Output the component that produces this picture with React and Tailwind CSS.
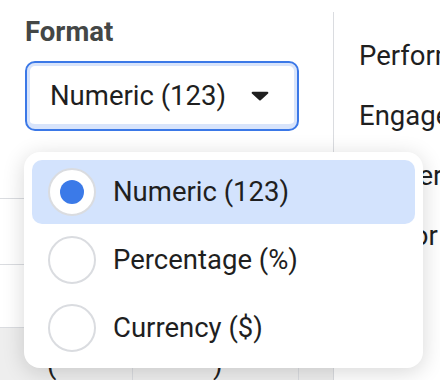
import React, { useState } from 'react'

const options = [
  { id: 'numeric', label: 'Numeric (123)' },
  { id: 'percent', label: 'Percentage (%)' },
  { id: 'currency', label: 'Currency ($)' },
]

const metrics = ['Performance', 'Engagement', 'Viewers', 'Visitor']

function Radio({ checked }) {
  return (
    <span className="w-[48px] h-[48px] shrink-0 rounded-full border-2 border-[#dadce0] bg-white flex items-center justify-center">
      {checked && <span className="w-[24px] h-[24px] rounded-full bg-[#3b7ae8]"></span>}
    </span>
  )
}

function App() {
  const [format, setFormat] = useState('numeric')
  const current = options.find((o) => o.id === format)

  return (
    <div className="relative w-[440px] h-[380px] overflow-hidden bg-white text-[#1f1f1f] font-['Roboto',sans-serif]">
      <div className="flex h-full">
        {/* left panel */}
        <div className="w-[334px] shrink-0 mt-[12px] border-r border-[#dadce0] flex flex-col">
          <div className="pl-[25px]">
            <div className="mt-[4px] h-[32px] leading-[32px] text-[27.5px] font-bold text-[#444746]">Format</div>
            <button className="mt-[13px] w-[274px] h-[70px] rounded-[10px] border-2 border-[#3b78e7] bg-white shadow-[inset_0_0_0_3px_#d8e4fb,inset_0_-5px_0_0_#d8e4fb] flex items-center justify-between pl-[23px] pr-[28px]">
              <span className="text-[27.5px] leading-[30px]">{current.label}</span>
              <svg width="18" height="10" viewBox="0 0 18 10">
                <path d="M1.6 0.8h14.8a1 1 0 0 1 .7 1.7L9.7 9.2a1 1 0 0 1-1.4 0L0.9 2.5A1 1 0 0 1 1.6 0.8z" fill="#1f1f1f" />
              </svg>
            </button>
          </div>
          {/* table behind the menu */}
          <div className="h-[73px] border-b border-[#dadce0]"></div>
          <div className="h-[70px] border-b border-[#dadce0]"></div>
          <div className="h-[67px] border-b border-[#dadce0]"></div>
          <div className="flex-1 flex bg-[#eeeeee]">
            <div className="w-[133px] border-r border-[#dadce0] pl-[47px] pt-[22px] text-[27.5px] leading-[30px]">(</div>
            <div className="w-[166px] border-r border-[#dadce0] pl-[80px] pt-[22px] text-[27.5px] leading-[30px]">)</div>
            <div className="flex-1"></div>
          </div>
        </div>
        {/* right panel */}
        <div className="flex-1 pl-[25px] pt-[26px] whitespace-nowrap">
          {metrics.map((m) => (
            <div key={m} className="h-[60px] leading-[60px] text-[27.5px]">{m}</div>
          ))}
        </div>
      </div>

      {/* open dropdown menu */}
      <div className="absolute left-[24px] top-[152px] w-[399px] rounded-[16px] bg-white p-[8px] flex flex-col gap-[4px] shadow-[0_4px_22px_rgba(0,0,0,0.16)]">
        {options.map((o) => (
          <div
            key={o.id}
            onClick={() => setFormat(o.id)}
            className={
              'h-[64px] rounded-[10px] flex items-center pl-[16px] gap-[17px] cursor-pointer ' +
              (format === o.id ? 'bg-[#d3e3fd]' : 'bg-white')
            }
          >
            <Radio checked={format === o.id} />
            <span className="text-[27.5px] leading-[30px]">{o.label}</span>
          </div>
        ))}
      </div>
    </div>
  )
}

export default App
